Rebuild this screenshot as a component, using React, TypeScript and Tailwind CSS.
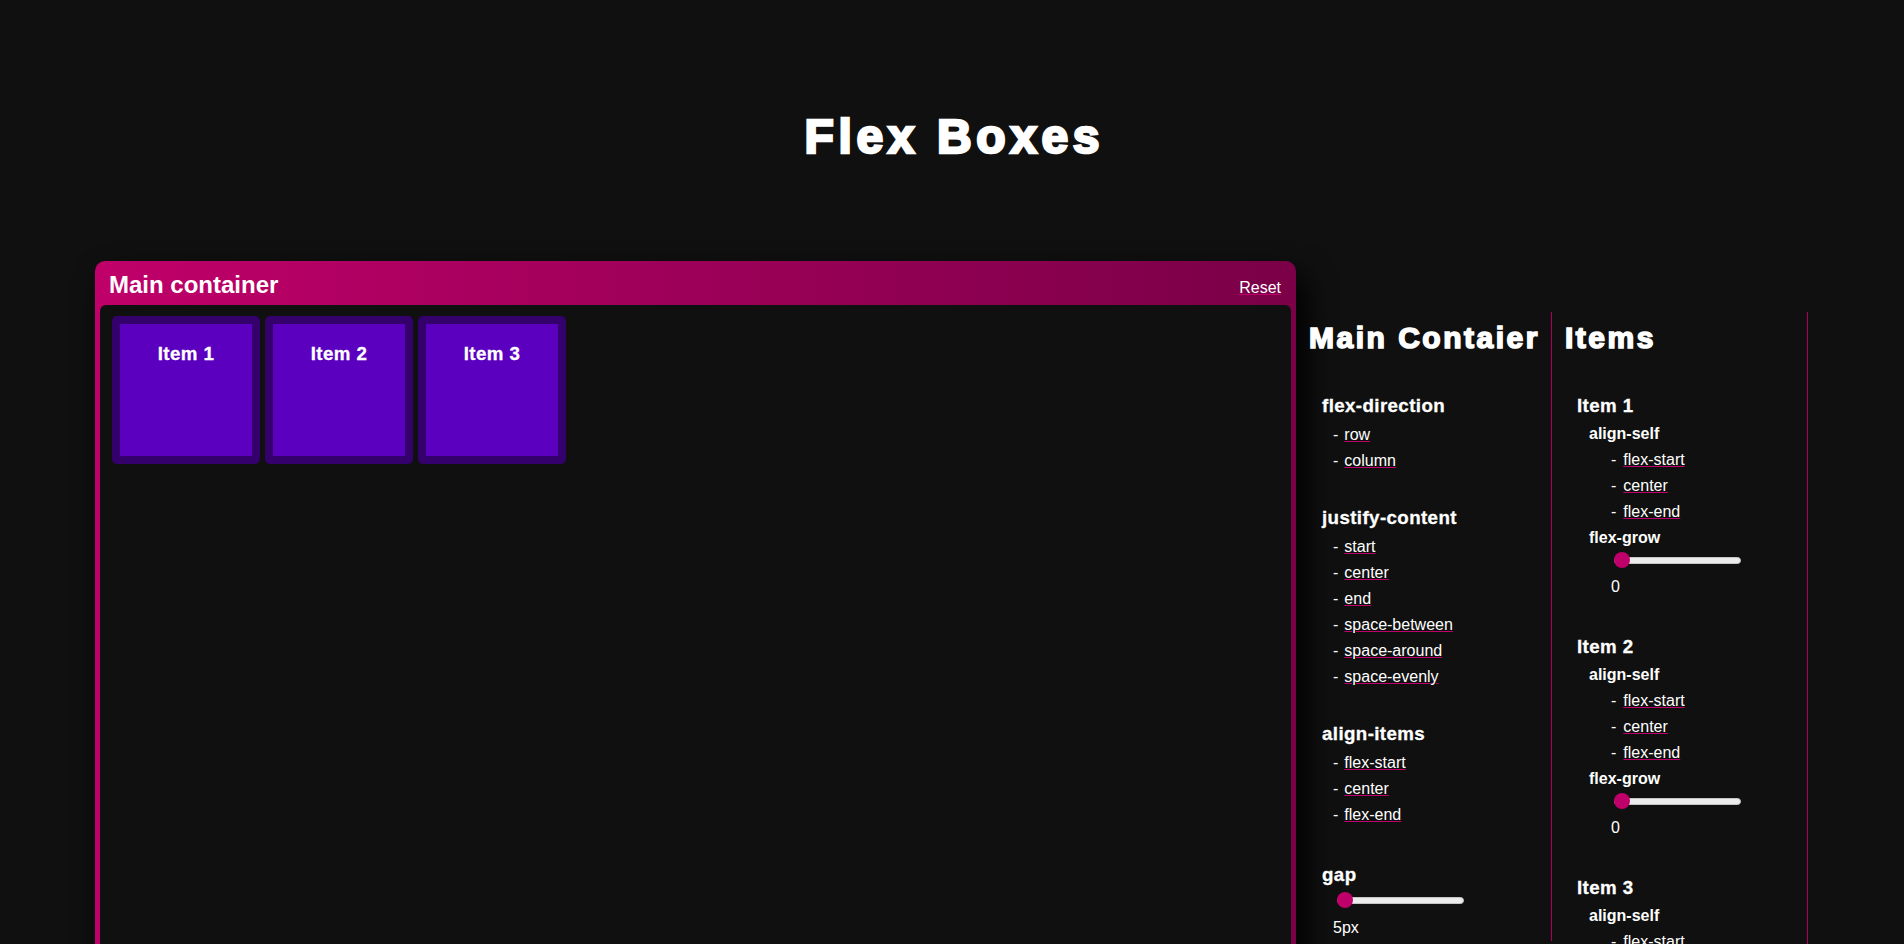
import React from "react";

const font = "font-['Liberation_Sans',Arial,Helvetica,sans-serif]";

function L({ children }: { children: React.ReactNode }) {
  return (
    <a href="#" className="text-white underline decoration-[#c0006a]">
      {children}
    </a>
  );
}

function Slider() {
  return (
    <div className="relative flex h-4 w-[127px] items-center">
      <div className="h-[7px] w-full rounded-full border border-[#c4c4c4] bg-[#ececec]" />
      <div className="absolute left-0 top-0 h-4 w-4 rounded-full bg-[#c0006a]" />
    </div>
  );
}

function MainSection({
  title,
  items,
  first,
}: {
  title: string;
  items: string[];
  first?: boolean;
}) {
  return (
    <div className={first ? "mt-[39px] pl-[14px]" : "mt-[33px] pl-[14px]"}>
      <h3 className="text-[18.72px] font-bold leading-[22px] tracking-[0.4px] [-webkit-text-stroke:0.3px_white]">{title}</h3>
      <ul className="mt-[5px] pl-[11px]">
        {items.map((it) => (
          <li key={it} className="text-[16px] leading-[26px]">
            <span className="mr-[6px]">-</span>
            <L>{it}</L>
          </li>
        ))}
      </ul>
    </div>
  );
}

function ItemSection({ n, first }: { n: number; first?: boolean }) {
  return (
    <div className={first ? "mt-[39px] pl-[13px]" : "mt-[36px] pl-[13px]"}>
      <h3 className="text-[18.72px] font-bold leading-[22px] tracking-[0.4px] [-webkit-text-stroke:0.3px_white]">Item {n}</h3>
      <div className="mt-[4px] pl-[12px]">
        <div className="text-[16px] font-bold leading-[26px]">align-self</div>
        <ul className="pl-[22px]">
          {["flex-start", "center", "flex-end"].map((it) => (
            <li key={it} className="text-[16px] leading-[26px]">
              <span className="mr-[7px]">-</span>
              <L>{it}</L>
            </li>
          ))}
        </ul>
        <div className="text-[16px] font-bold leading-[26px]">flex-grow</div>
        <div className="mt-[1px] pl-[25px]">
          <Slider />
        </div>
        <div className="mt-[6px] pl-[22px] text-[16px] leading-[26px]">0</div>
      </div>
    </div>
  );
}

function Box({ n }: { n: number }) {
  return (
    <div className="rounded-[5px] bg-[#34006b] p-2">
      <div className="flex h-[132px] w-[132px] flex-col items-center bg-[#5b00bf]">
        <h3 className="mt-[19px] text-[18.72px] font-bold leading-[22px] tracking-[0.4px] [-webkit-text-stroke:0.3px_white]">
          Item {n}
        </h3>
      </div>
    </div>
  );
}

export default function App() {
  return (
    <div className={`${font} min-h-screen bg-[#101010] pb-10 pt-[109px] text-white`}>
      <h1 className="pl-[4.6px] text-center text-[48px] font-bold leading-[56px] tracking-[4.6px] [-webkit-text-stroke:2.6px_white]">
        Flex Boxes
      </h1>
      <div className="mt-[96px] flex items-start px-[95px]">
        <div className="w-[1201px] shrink-0 rounded-t-[10px] rounded-b-[10px] bg-gradient-to-r from-[#c0006a] to-[#7a0047] px-[5px] pb-[5px] shadow-[10px_15px_30px_#000]">
          <div className="flex h-[44px] items-baseline justify-between pl-[9px] pr-[10px] pt-[10px]">
            <span className="text-[24px] font-bold leading-[28px]">Main container</span>
            <L>Reset</L>
          </div>
          <div className="flex h-[760px] items-start gap-[5px] rounded-[6px] bg-[#101010] pl-3 pt-[11px]">
            <Box n={1} />
            <Box n={2} />
            <Box n={3} />
          </div>
        </div>
        <div className="mt-[51px] w-[256px] shrink-0 border-r border-[#a8005c] pl-[13px] pt-2">
          <h1 className="text-[30px] font-bold leading-[36px] tracking-[2.5px] [-webkit-text-stroke:1.6px_white]">
            Main Contaier
          </h1>
          <div className="-ml-[1px]">
            <MainSection first title="flex-direction" items={["row", "column"]} />
            <MainSection
              title="justify-content"
              items={["start", "center", "end", "space-between", "space-around", "space-evenly"]}
            />
            <MainSection title="align-items" items={["flex-start", "center", "flex-end"]} />
            <div className="mt-[36px] pl-[14px]">
              <h3 className="text-[18.72px] font-bold leading-[22px] tracking-[0.4px] [-webkit-text-stroke:0.3px_white]">gap</h3>
              <div className="mt-[6px] pl-[15px]">
                <Slider />
              </div>
              <div className="mt-[7px] pl-[11px] text-[16px] leading-[26px]">5px</div>
            </div>
          </div>
        </div>
        <div className="mt-[51px] w-[256px] shrink-0 border-r border-[#a8005c] pl-[13px] pt-2">
          <h1 className="text-[30px] font-bold leading-[36px] tracking-[2.5px] [-webkit-text-stroke:1.6px_white]">
            Items
          </h1>
          <div className="-ml-[1px]">
            <ItemSection n={1} first />
            <ItemSection n={2} />
            <ItemSection n={3} />
          </div>
        </div>
      </div>
    </div>
  );
}
